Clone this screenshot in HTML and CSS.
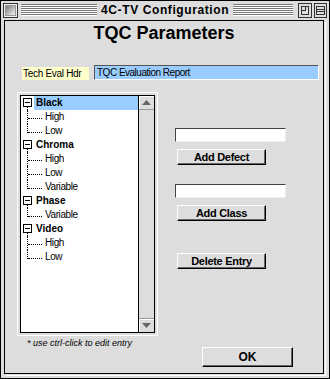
FILE: index.html
```html
<!DOCTYPE html>
<html lang="en">
<head>
  <meta charset="UTF-8">
  <meta name="viewport" content="width=device-width, initial-scale=1.0">
  <title>4C-TV Configuration</title>
  <link rel="stylesheet" href="styles.css">
</head>
<body>
  <div class="window">
    <div class="titlebar">
      <span class="close-box"><span class="close-inner"></span></span>
      <span class="stripes stripes-left"></span>
      <span class="win-title">4C-TV Configuration</span>
      <span class="stripes stripes-right"></span>
      <span class="zoom-box">
        <svg width="14" height="15" viewBox="0 0 14 15">
          <rect x="0.5" y="0.5" width="13" height="14" fill="#dddddd" stroke="#333"/>
          <rect x="3.5" y="3.5" width="7" height="8" fill="none" stroke="#333"/>
          <rect x="3.5" y="3.5" width="4" height="4" fill="none" stroke="#333"/>
        </svg>
      </span>
      <span class="shade-box">
        <svg width="13" height="15" viewBox="0 0 13 15">
          <rect x="0.5" y="0.5" width="12" height="14" fill="#dddddd" stroke="#333"/>
          <rect x="2.5" y="3.5" width="8" height="8" fill="none" stroke="#333"/>
          <line x1="3" y1="6.5" x2="10" y2="6.5" stroke="#333"/>
          <line x1="3" y1="8.5" x2="10" y2="8.5" stroke="#333"/>
        </svg>
      </span>
    </div>

    <div class="content">
      <h1 class="title">TQC Parameters</h1>

      <div class="header-row">
        <span class="hdr-label">Tech Eval Hdr</span>
        <div class="hdr-field">TQC Evaluation Report</div>
      </div>

      <div class="main">
        <div class="list">
          <div class="tree">
            <div class="node">
              <div class="node-row"><span class="minus"></span><span class="node-name selected">Black</span></div>
              <div class="leaf"><span class="conn"><span class="conn-h"></span></span>High</div>
              <div class="leaf last"><span class="conn"><span class="conn-h"></span></span>Low</div>
            </div>
            <div class="node">
              <div class="node-row"><span class="minus"></span><span class="node-name">Chroma</span></div>
              <div class="leaf"><span class="conn"><span class="conn-h"></span></span>High</div>
              <div class="leaf"><span class="conn"><span class="conn-h"></span></span>Low</div>
              <div class="leaf last"><span class="conn"><span class="conn-h"></span></span>Variable</div>
            </div>
            <div class="node">
              <div class="node-row"><span class="minus"></span><span class="node-name">Phase</span></div>
              <div class="leaf last"><span class="conn"><span class="conn-h"></span></span>Variable</div>
            </div>
            <div class="node">
              <div class="node-row"><span class="minus"></span><span class="node-name">Video</span></div>
              <div class="leaf"><span class="conn"><span class="conn-h"></span></span>High</div>
              <div class="leaf last"><span class="conn"><span class="conn-h"></span></span>Low</div>
            </div>
          </div>
          <div class="scrollbar">
            <div class="sb-btn sb-up">
              <svg width="9" height="5" viewBox="0 0 9 5"><polygon points="4.5,0 9,5 0,5" fill="#666"/></svg>
            </div>
            <div class="sb-track"></div>
            <div class="sb-btn sb-down">
              <svg width="9" height="5" viewBox="0 0 9 5"><polygon points="0,0 9,0 4.5,5" fill="#666"/></svg>
            </div>
          </div>
        </div>

        <div class="controls">
          <div class="field"></div>
          <button class="btn">Add Defect</button>
          <div class="field field-gap"></div>
          <button class="btn">Add Class</button>
          <button class="btn btn-delete">Delete Entry</button>
        </div>
      </div>

      <div class="footer">
        <p class="note">* use ctrl-click to edit entry</p>
        <button class="btn btn-ok">OK</button>
      </div>
    </div>
  </div>
</body>
</html>
```

FILE: styles.css
```css
* {
  margin: 0;
  padding: 0;
  box-sizing: border-box;
  font-family: 'Liberation Sans', Arial, sans-serif;
}

body {
  background-color: #fff;
  width: 330px;
  height: 379px;
  overflow: hidden;
}

.window {
  width: 330px;
  height: 379px;
  border: 1px solid #000;
  background-color: #dddddd;
  display: flex;
  flex-direction: column;
}

/* Title bar */
.titlebar {
  height: 19px;
  display: flex;
  align-items: flex-start;
  flex-shrink: 0;
}

.close-box {
  width: 15px;
  height: 15px;
  margin: 2px 0 0 2px;
  border: 1px solid #333;
  background-color: #eee;
  padding: 1px;
  display: flex;
}

.close-inner {
  flex: 1;
  background: linear-gradient(135deg, #7a7a7a, #f2f2f2);
  border: 1px solid #999;
}

.stripes {
  height: 12px;
  margin-top: 3px;
  background: repeating-linear-gradient(to bottom, #777 0 1px, #fff 1px 2px);
}

.stripes-left {
  flex: 75;
  margin-left: 3px;
}

.stripes-right {
  flex: 59;
}

.win-title {
  font-size: 12px;
  font-weight: bold;
  letter-spacing: 0.6px;
  line-height: 19px;
  padding: 0 4px;
  white-space: nowrap;
  color: #000;
}

.zoom-box {
  margin: 2px 0 0 5px;
  height: 15px;
  display: flex;
}

.shade-box {
  margin: 2px 2px 0 2px;
  height: 15px;
  display: flex;
}

/* Content */
.content {
  flex: 1;
  margin: 0 5px 4px 3px;
  border: 1px solid #000;
  background-color: #dddddd;
  box-shadow: 1px 1px 0 #dddddd, 2px 2px 0 #fff;
}

.title {
  font-size: 18px;
  font-weight: bold;
  line-height: 22px;
  text-align: center;
  margin-top: 1px;
  color: #000;
}

.header-row {
  display: flex;
  align-items: flex-end;
  height: 15px;
  margin-top: 21px;
  padding-left: 17px;
}

.hdr-label {
  width: 67px;
  height: 13px;
  background-color: #ffffcc;
  font-size: 10px;
  line-height: 13px;
  padding-left: 1px;
  letter-spacing: -0.3px;
  white-space: nowrap;
}

.hdr-field {
  width: 225px;
  height: 15px;
  margin-left: 5px;
  background-color: #99ccff;
  border: 1px solid;
  border-color: #555 #fff #fff #555;
  font-size: 10px;
  line-height: 13px;
  padding-left: 2px;
  letter-spacing: -0.5px;
  white-space: nowrap;
}

.main {
  display: flex;
  align-items: flex-start;
  margin-top: 15px;
  padding-left: 15px;
}

/* Tree list */
.list {
  width: 135px;
  height: 238px;
  border: 1px solid #000;
  background-color: #fff;
  display: flex;
  box-shadow: 0 0 0 2px #dddddd, 0 0 0 3px #fff;
}

.tree {
  flex: 1;
  font-size: 10px;
  color: #000;
}

.node-row {
  display: flex;
  height: 14px;
}

.minus {
  position: relative;
  width: 9px;
  height: 9px;
  margin: 2px 2px 0 2px;
  border: 1px solid #000;
  background-color: #fff;
  display: flex;
  align-items: center;
  justify-content: center;
}

.minus::before {
  content: "";
  width: 5px;
  height: 1px;
  background-color: #000;
}

.minus::after {
  content: "";
  position: absolute;
  top: 8px;
  left: 3px;
  height: 3px;
  border-left: 1px dotted #000;
}

.node-name {
  flex: 1;
  padding-left: 2px;
  font-weight: bold;
  line-height: 14px;
}

.selected {
  background-color: #99ccff;
}

.leaf {
  display: flex;
  align-items: flex-start;
  height: 14px;
  padding-left: 6px;
  line-height: 14px;
  letter-spacing: -0.4px;
}

.conn {
  width: 16px;
  height: 14px;
  margin-right: 2px;
  border-left: 1px dotted #000;
  flex-shrink: 0;
}

.last .conn {
  height: 9px;
}

.conn-h {
  display: block;
  width: 14px;
  margin-top: 8px;
  border-top: 1px dotted #000;
}

.scrollbar {
  width: 16px;
  border-left: 1px solid #000;
  display: flex;
  flex-direction: column;
  background-color: #dddddd;
}

.sb-btn {
  height: 14px;
  display: flex;
  align-items: center;
  justify-content: center;
  background-color: #dddddd;
  box-shadow: inset 1px 1px 0 #fff;
}

.sb-up {
  border-bottom: 1px solid #999;
}

.sb-track {
  flex: 1;
}

.sb-down {
  border-top: 1px solid #999;
}

/* Right side controls */
.controls {
  margin-left: 20px;
  padding-top: 33px;
  display: flex;
  flex-direction: column;
  align-items: flex-start;
}

.field {
  width: 111px;
  height: 14px;
  background-color: #fff;
  border: 1px solid;
  border-color: #444 #eee #eee #444;
}

.field-gap {
  margin-top: 19px;
}

.btn {
  width: 89px;
  height: 16px;
  margin: 7px 0 0 2px;
  background-color: #dddddd;
  border: 1px solid;
  border-color: #fff #000 #000 #fff;
  box-shadow: inset -1px -1px 0 #666;
  font-size: 11px;
  font-weight: bold;
  letter-spacing: -0.3px;
  color: #000;
  padding: 0;
  cursor: pointer;
}

.btn-delete {
  margin-top: 32px;
}

.footer {
  display: flex;
  justify-content: space-between;
  align-items: flex-start;
  padding: 0 30px 0 22px;
}

.note {
  font-size: 9px;
  font-style: italic;
  line-height: 10px;
  margin-top: 5px;
  color: #000;
}

.btn-ok {
  width: 91px;
  height: 20px;
  margin: 14px 0 0 0;
  font-size: 12px;
  letter-spacing: 0;
}
```
